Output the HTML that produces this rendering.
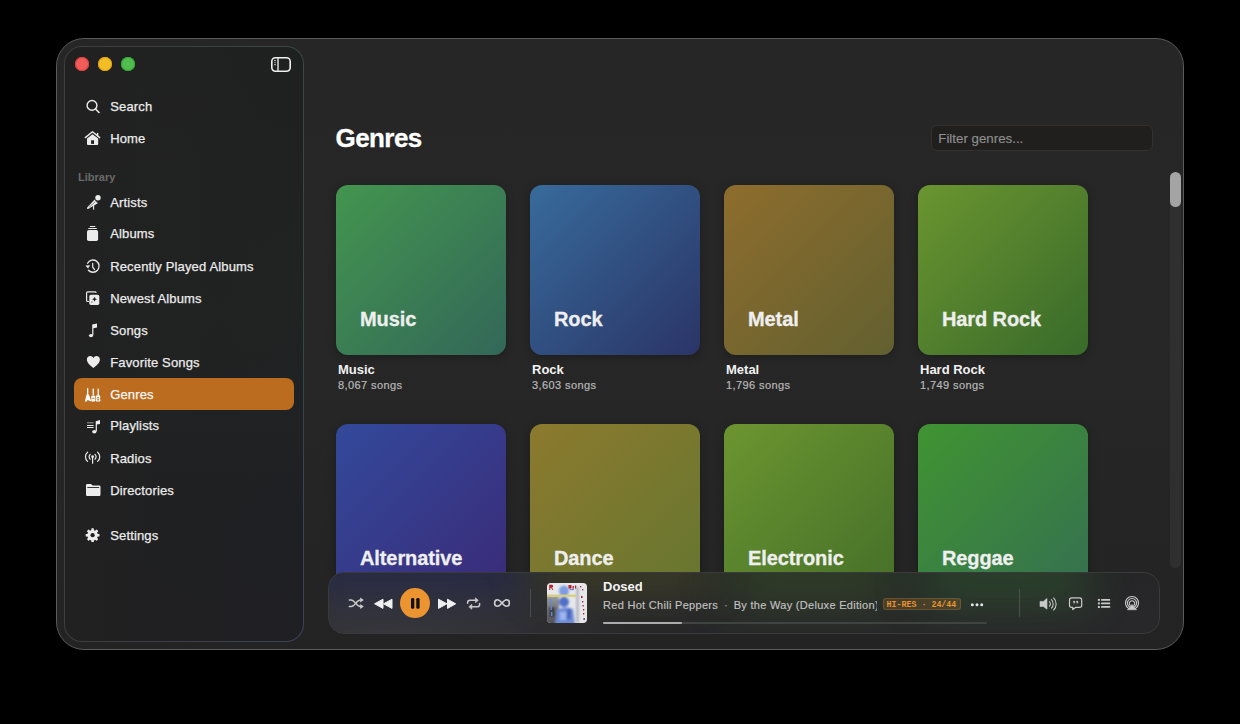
<!DOCTYPE html>
<html><head><meta charset="utf-8">
<style>
*{box-sizing:border-box;margin:0;padding:0}
html,body{width:1240px;height:724px;background:#000;overflow:hidden;font-family:"Liberation Sans",sans-serif;-webkit-font-smoothing:antialiased}
.abs{position:absolute}
#win{position:absolute;left:56px;top:38px;width:1128px;height:612px;border-radius:28px;background:linear-gradient(180deg,#262626 0%,#272727 50%,#232323 100%);border:1px solid #5a5a5a;overflow:hidden}
.tl{position:absolute;top:57px;width:14px;height:14px;border-radius:50%}
.item{position:absolute;left:110.2px;font-size:13px;line-height:13px;color:#ececec;white-space:nowrap;letter-spacing:0.15px;-webkit-text-stroke:0.25px #ececec}
.ico{position:absolute;left:84px;width:18px;height:18px}
.card{position:absolute;width:170px;height:170px;border-radius:12px;box-shadow:0 2px 8px rgba(0,0,0,0.25)}
.ctitle{position:absolute;left:24px;top:124px;font-size:20px;line-height:20px;font-weight:bold;color:#efefef;letter-spacing:-0.1px;white-space:nowrap;-webkit-text-stroke:0.3px #efefef}
.lbl{position:absolute;font-size:13px;line-height:13px;font-weight:bold;color:#f2f2f2;white-space:nowrap}
.cnt{position:absolute;font-size:11px;line-height:11px;color:#b8b8b8;white-space:nowrap;letter-spacing:0.4px;-webkit-text-stroke:0.2px #b8b8b8}
</style></head>
<body>
<div id="win"></div>
<div id="sideb" class="abs" style="left:64px;top:46px;width:240px;height:596px;border-radius:18px;background:linear-gradient(90deg,rgba(62,62,62,1) 0%,rgba(62,62,62,0.6) 50%,rgba(62,62,62,0) 100%),linear-gradient(180deg,#3a4a40 0%,#2f4a42 45%,#3a4256 80%,#3e4258 100%)"></div>
<div id="side" class="abs" style="left:65px;top:47px;width:238px;height:594px;border-radius:17px;background:linear-gradient(90deg,rgba(33,33,33,1) 0%,rgba(33,33,33,0) 100%),linear-gradient(180deg,#1f2120 0%,#202322 45%,#1f2024 80%,#1f1f24 100%)"></div>
<div class="tl" style="left:75px;background:#f15b5a;box-shadow:inset 0 0 0 1px #e0403c"></div>
<div class="tl" style="left:98px;background:#f3bd25;box-shadow:inset 0 0 0 1px #dea216"></div>
<div class="tl" style="left:121px;background:#52bd4f;box-shadow:inset 0 0 0 1px #33a833"></div>

<!-- sidebar toggle -->
<svg class="abs" style="left:270px;top:56px" width="22" height="17" viewBox="0 0 22 17">
<rect x="1.8" y="1.8" width="18.4" height="13.4" rx="3.6" fill="none" stroke="#f0f0f0" stroke-width="1.6"/>
<line x1="8" y1="1.8" x2="8" y2="15.2" stroke="#d8d8d8" stroke-width="1.5"/>
<line x1="4.2" y1="4.6" x2="5.8" y2="4.6" stroke="#ddd" stroke-width="1"/>
<line x1="4.2" y1="6.7" x2="5.8" y2="6.7" stroke="#aaa" stroke-width="1"/>
<line x1="4.2" y1="8.7" x2="5.8" y2="8.7" stroke="#ddd" stroke-width="1"/>
</svg>

<!-- sidebar items -->
<div class="item" style="top:100px">Search</div>
<div class="item" style="top:132px">Home</div>
<div class="abs" style="left:78px;top:171.7px;font-size:11px;line-height:11px;font-weight:bold;color:#6a6a6a">Library</div>
<div class="abs" style="left:74px;top:378px;width:220px;height:32px;border-radius:8px;background:#bb6c1f"></div>
<div class="item" style="top:196px">Artists</div>
<div class="item" style="top:227px">Albums</div>
<div class="item" style="top:260px">Recently Played Albums</div>
<div class="item" style="top:292px">Newest Albums</div>
<div class="item" style="top:323.6px">Songs</div>
<div class="item" style="top:356px">Favorite Songs</div>
<div class="item" style="top:388px;color:#fff">Genres</div>
<div class="item" style="top:419.4px">Playlists</div>
<div class="item" style="top:451.8px">Radios</div>
<div class="item" style="top:483.7px">Directories</div>
<div class="item" style="top:529.3px">Settings</div>

<!-- main -->
<div class="abs" style="left:335.6px;top:125px;font-size:26px;line-height:26px;font-weight:bold;color:#fff;letter-spacing:-0.6px;-webkit-text-stroke:0.3px #fff">Genres</div>
<div class="abs" style="left:931px;top:125px;width:222px;height:26px;border-radius:6px;background:#201f1e;border:1px solid #323130"></div>
<div class="abs" style="left:938.3px;top:131.8px;font-size:13.3px;line-height:13px;color:#8e8e8e;-webkit-text-stroke:0.15px #8e8e8e">Filter genres...</div>

<div class="abs" style="left:1170px;top:172px;width:11px;height:396px;border-radius:5.5px;background:#2f2f2f"></div>
<div class="abs" style="left:1170px;top:172px;width:11px;height:35px;border-radius:5.5px;background:#a4a4a4"></div>

<div class="card" style="left:336px;top:185px;background:linear-gradient(135deg,#43954f,#336759)"><div class="ctitle">Music</div></div>
<div class="card" style="left:530px;top:185px;background:linear-gradient(135deg,#376b9b,#2b3467)"><div class="ctitle">Rock</div></div>
<div class="card" style="left:724px;top:185px;background:linear-gradient(135deg,#8e6d2d,#626030)"><div class="ctitle">Metal</div></div>
<div class="card" style="left:918px;top:185px;background:linear-gradient(135deg,#6b9530,#386a2a)"><div class="ctitle">Hard Rock</div></div>

<div class="lbl" style="left:338px;top:363px">Music</div><div class="cnt" style="left:338px;top:380px">8,067 songs</div>
<div class="lbl" style="left:532px;top:363px">Rock</div><div class="cnt" style="left:532px;top:380px">3,603 songs</div>
<div class="lbl" style="left:726px;top:363px">Metal</div><div class="cnt" style="left:726px;top:380px">1,796 songs</div>
<div class="lbl" style="left:920px;top:363px">Hard Rock</div><div class="cnt" style="left:920px;top:380px">1,749 songs</div>

<div class="card" style="left:336px;top:424px;background:linear-gradient(135deg,#33499b,#3a2b78)"><div class="ctitle">Alternative</div></div>
<div class="card" style="left:530px;top:424px;background:linear-gradient(135deg,#8c7a2e,#667630)"><div class="ctitle">Dance</div></div>
<div class="card" style="left:724px;top:424px;background:linear-gradient(135deg,#6c9530,#457029)"><div class="ctitle">Electronic</div></div>
<div class="card" style="left:918px;top:424px;background:linear-gradient(135deg,#409432,#357050)"><div class="ctitle">Reggae</div></div>

<!-- player -->
<div id="player" class="abs" style="left:328px;top:572px;width:832px;height:62px;border-radius:16px;overflow:hidden;background:#28282a;border:1px solid #3a3a3c">
 <div class="abs" style="left:-30px;top:-40px;width:230px;height:70px;background:#34409a;filter:blur(22px);opacity:0.3"></div>
 <div class="abs" style="left:200px;top:-40px;width:180px;height:60px;background:#7a7a2e;filter:blur(22px);opacity:0.3"></div>
 <div class="abs" style="left:396px;top:-40px;width:170px;height:70px;background:#4a7a2a;filter:blur(24px);opacity:0.32"></div>
 <div class="abs" style="left:590px;top:-40px;width:170px;height:70px;background:#3a8a3a;filter:blur(24px);opacity:0.32"></div>
 <div class="abs" style="left:0;top:0;width:832px;height:62px;background:radial-gradient(ellipse 260px 70px at 60px 70px,rgba(70,70,76,0.55),rgba(70,70,76,0) 100%),linear-gradient(180deg,rgba(20,20,20,0.12) 0%,rgba(20,20,20,0) 60%)"></div>
</div>


<!-- icons overlay -->
<svg class="abs" style="left:0;top:0" width="1240" height="724" viewBox="0 0 1240 724">
<g fill="none" stroke="#ececec" stroke-linecap="round" stroke-linejoin="round">
 <!-- search -->
 <circle cx="92" cy="105.4" r="4.9" stroke-width="1.4"/>
 <line x1="95.6" y1="109" x2="99" y2="112.5" stroke-width="1.6"/>
 <!-- home roof -->
 <path d="M85.3 137.6 L92.5 131.8 L99.7 137.6" stroke-width="1.4"/>
 <line x1="97.6" y1="133.4" x2="97.6" y2="135.6" stroke-width="1.4"/>
</g>
<g fill="#ececec" stroke="none">
 <!-- home body -->
 <path d="M87 138.6 L92.5 134.3 L98.2 138.6 L98.2 144 Q98.2 145 97.2 145 L88 145 Q87 145 87 144 Z"/>
 <rect x="91.1" y="140.3" width="2.9" height="3.6" fill="#1f2120"/>
 <!-- albums -->
 <rect x="87" y="229.9" width="11.1" height="11.1" rx="1.8"/>
 <rect x="88.2" y="227.9" width="8.7" height="1" rx="0.5"/>
 <rect x="89.8" y="226.1" width="5.6" height="1" rx="0.5"/>
 <!-- newest front -->
 <rect x="89.3" y="294.8" width="10" height="10.1" rx="1.6"/>
 <!-- heart -->
 <path d="M93.4 368 C90 365.3 86.9 363 86.9 359.6 C86.9 357.4 88.4 356 90.3 356 C91.7 356 92.8 356.9 93.4 358 C94 356.9 95.1 356 96.5 356 C98.4 356 99.9 357.4 99.9 359.6 C99.9 363 96.8 365.3 93.4 368 Z"/>
 <!-- folder -->
 <path d="M86 485.2 Q86 484 87.2 484 L90.6 484 Q91.3 484 91.8 484.6 L92.6 485.5 L99.3 485.5 Q100.5 485.5 100.5 486.7 L100.5 494.7 Q100.5 495.9 99.3 495.9 L87.2 495.9 Q86 495.9 86 494.7 Z"/>
 <rect x="87.3" y="487.1" width="11.8" height="0.9" fill="#1f2122"/>
 <!-- radios center -->
 <circle cx="92.6" cy="456.7" r="1.4"/>
 <rect x="92" y="457" width="1.2" height="6.8" rx="0.6"/>
 <!-- songs note -->
 <path d="M92.2 335 L92.2 324.6 L97 323.6 L97 327.4 L93.4 328.3 L93.4 335 Z"/>
 <ellipse cx="91" cy="335.6" rx="2.1" ry="1.7"/>
 <!-- playlist -->
 <rect x="87" y="422.3" width="6.6" height="1" fill="#9a9a9a"/>
 <rect x="87" y="425" width="6.6" height="1"/>
 <rect x="87" y="427" width="6.6" height="1"/>
 <path d="M95.7 431.5 L95.7 421.2 L100 420.1 L100 423.9 L96.9 424.6 L96.9 431.5 Z"/>
 <ellipse cx="94.3" cy="431.7" rx="2.1" ry="1.7"/>
</g>
<g fill="none" stroke="#ececec" stroke-linecap="round">
 <!-- artists mic -->
 <circle cx="98" cy="197.8" r="2.7" fill="#ececec" stroke="none"/>
 <path d="M94.6 199.6 L98.2 203 L88.6 208.8 Q87.4 209.4 87 208.6 Q86.8 207.8 87.4 207.2 Z" fill="#ececec" stroke="none"/>
 <line x1="95" y1="200.4" x2="97.6" y2="202.8" stroke="#1f2120" stroke-width="0.8"/>
 <line x1="89.2" y1="207.2" x2="94.6" y2="202.4" stroke="#5a5a5a" stroke-width="0.7"/>
 <line x1="93.6" y1="204.4" x2="93.6" y2="209.2" stroke-width="1.1"/>
 <!-- clock -->
 <path d="M87.6 263.2 A6.1 6.1 0 1 1 88.4 270.2" stroke-width="1.3"/>
 <path d="M92.7 263.4 L92.7 267.2 L94.6 269.6" stroke-width="1.2"/>
 <!-- newest back -->
 <path d="M96 292.4 Q96 291.9 95 291.9 L87.6 291.9 Q86.6 291.9 86.6 293 L86.6 300.6 Q86.6 301.5 87.6 301.5 L88.6 301.5" stroke-width="1.2"/>
 <!-- radios arcs -->
 <path d="M90.2 454.4 A3.2 3.2 0 0 0 90.2 459.2" stroke-width="1.2"/>
 <path d="M95 454.4 A3.2 3.2 0 0 1 95 459.2" stroke-width="1.2"/>
 <path d="M87.6 452.2 A6 6 0 0 0 87.6 461.4" stroke-width="1.2"/>
 <path d="M97.6 452.2 A6 6 0 0 1 97.6 461.4" stroke-width="1.2"/>
</g>
<!-- clock arrow -->
<path d="M85.4 265.4 L88 268.4 L90.2 265.2 Z" fill="#ececec"/>
<!-- sparkle -->
<path d="M94.5 296.8 Q94.9 299 97 299.3 Q94.9 299.6 94.5 301.8 Q94.1 299.6 92 299.3 Q94.1 299 94.5 296.8 Z" fill="#1f2120"/>
<rect x="91.2" y="301.4" width="1.3" height="1.3" fill="#777"/>
<!-- gear -->
<g transform="translate(92.6 535.2)" fill="#ececec">
 <circle r="5.3"/>
 <g id="tooth"><rect x="-1.3" y="-6.9" width="2.6" height="3" rx="0.6"/></g>
 <use href="#tooth" transform="rotate(45)"/>
 <use href="#tooth" transform="rotate(90)"/>
 <use href="#tooth" transform="rotate(135)"/>
 <use href="#tooth" transform="rotate(180)"/>
 <use href="#tooth" transform="rotate(225)"/>
 <use href="#tooth" transform="rotate(270)"/>
 <use href="#tooth" transform="rotate(315)"/>
 <circle r="2.1" fill="#1f1f21"/>
</g>
<!-- genres guitars -->
<g fill="#fff">
 <rect x="87" y="388.2" width="1.3" height="7"/>
 <rect x="92.6" y="388.6" width="1.3" height="7"/>
 <rect x="97.6" y="388.6" width="1.3" height="7"/>
 <path d="M86.6 394.6 L88.9 394.6 L91.4 401.6 L88.6 400.4 L87.8 399.5 L86.8 401.6 L84.8 401.6 Z"/>
 <rect x="91.3" y="395.8" width="4" height="5.8" rx="0.8"/>
 <path d="M96.4 395.2 L99.9 395.2 L100.4 397.5 L99.8 398.4 L100.6 400.2 L100 401.6 L96.2 401.6 L95.6 400.2 L96.4 398.4 L95.8 397.5 Z"/>
</g>
<g fill="#bb6c1f">
 <rect x="92.3" y="397.8" width="2" height="1"/>
 <rect x="97.2" y="397.2" width="1.8" height="1.2"/>
 <rect x="97.2" y="399.2" width="1.8" height="1.2"/>
</g>
</svg>

<!-- player contents -->
<svg class="abs" style="left:0;top:0" width="1240" height="724" viewBox="0 0 1240 724">
 <!-- shuffle -->
 <g fill="none" stroke="#c9c9c9" stroke-width="1.5" stroke-linecap="round">
  <path d="M349.3 599.9 L351.2 599.9 C355 599.9 356.3 606.6 360.4 606.6 L362 606.6"/>
  <path d="M349.3 606.6 L351.2 606.6 C355 606.6 356.3 599.9 360.4 599.9 L362 599.9"/>
 </g>
 <path d="M360.2 597.4 L363.8 599.9 L360.2 602.4 Z" fill="#c9c9c9"/>
 <path d="M360.2 604.1 L363.8 606.6 L360.2 609.1 Z" fill="#c9c9c9"/>
 <!-- rewind -->
 <g fill="#f0f0f0" stroke="#f0f0f0" stroke-width="1" stroke-linejoin="round">
  <path d="M374.6 603.8 L383 599.2 L383 608.4 Z"/>
  <path d="M383.6 603.8 L392 599.2 L392 608.4 Z"/>
 </g>
 <!-- play/pause -->
 <circle cx="415" cy="603.1" r="15" fill="#ec9430"/>
 <rect x="411" y="597.9" width="3.3" height="10.9" rx="1.4" fill="#111"/>
 <rect x="416.3" y="597.9" width="3.3" height="10.9" rx="1.4" fill="#111"/>
 <!-- forward -->
 <g fill="#f0f0f0" stroke="#f0f0f0" stroke-width="1" stroke-linejoin="round">
  <path d="M438.5 599.2 L446.9 603.8 L438.5 608.4 Z"/>
  <path d="M447.5 599.2 L455.7 603.8 L447.5 608.4 Z"/>
 </g>
 <!-- repeat -->
 <g fill="none" stroke="#c9c9c9" stroke-width="1.5" stroke-linecap="round">
  <path d="M467.6 603.3 L467.6 602.6 Q467.6 600.3 470 600.3 L476 600.3"/>
  <path d="M479.6 603.5 L479.6 604.4 Q479.6 606.8 477.2 606.8 L471 606.8"/>
 </g>
 <path d="M475.4 597.8 L478.4 600.3 L475.4 602.8 Z" fill="#c9c9c9" stroke="#c9c9c9" stroke-width="0.6" stroke-linejoin="round"/>
 <path d="M471.8 604.3 L468.8 606.8 L471.8 609.3 Z" fill="#c9c9c9" stroke="#c9c9c9" stroke-width="0.6" stroke-linejoin="round"/>
 <!-- infinity -->
 <path d="M502 603 C499.5 600 498 599.7 497.5 599.7 C495.6 599.7 494.6 601.3 494.6 603 C494.6 604.7 495.6 606.3 497.5 606.3 C498 606.3 499.5 606 502 603 C504.5 600 506 599.7 506.5 599.7 C508.4 599.7 509.4 601.3 509.4 603 C509.4 604.7 508.4 606.3 506.5 606.3 C506 606.3 504.5 606 502 603 Z" fill="none" stroke="#cfcfcf" stroke-width="1.6"/>
 <!-- dividers -->
 <rect x="530" y="589" width="1" height="28" fill="#4a4a4a"/>
 <rect x="1019" y="589" width="1" height="28" fill="#4e4e4e"/>
 <!-- progress -->
 <rect x="603" y="622" width="384" height="2" rx="1" fill="#404440"/>
 <rect x="603" y="622" width="79" height="2" rx="1" fill="#acacac"/>
 <!-- dots -->
 <circle cx="972.3" cy="604.8" r="1.5" fill="#e6e6e6"/>
 <circle cx="977" cy="604.8" r="1.5" fill="#e6e6e6"/>
 <circle cx="981.7" cy="604.8" r="1.5" fill="#e6e6e6"/>
 <!-- volume -->
 <path d="M1040 601.4 L1043.3 601.4 L1047 598.4 L1047 609.2 L1043.3 606.5 L1040 606.5 Z" fill="#c9c9c9" stroke="#c9c9c9" stroke-width="0.6" stroke-linejoin="round"/>
 <g fill="none" stroke="#c9c9c9" stroke-width="1.1" stroke-linecap="round">
  <path d="M1049.4 601.6 A3.2 3.2 0 0 1 1049.4 606.2"/>
  <path d="M1051.4 599.6 A6 6 0 0 1 1051.4 608.2"/>
  <path d="M1053.6 597.8 A8.6 8.6 0 0 1 1053.6 610"/>
 </g>
 <!-- lyrics -->
 <path d="M1071.6 597.9 L1079.6 597.9 Q1081.7 597.9 1081.7 600 L1081.7 605.2 Q1081.7 607.3 1079.6 607.3 L1075.8 607.3 L1072.8 609.6 L1072.8 607.3 L1071.6 607.3 Q1069.5 607.3 1069.5 605.2 L1069.5 600 Q1069.5 597.9 1071.6 597.9 Z" fill="none" stroke="#c9c9c9" stroke-width="1.2" stroke-linejoin="round"/>
 <circle cx="1074" cy="601.7" r="0.95" fill="#c9c9c9"/><path d="M1074.9 601.7 Q1074.9 603.4 1073.6 603.8" stroke="#c9c9c9" stroke-width="0.8" fill="none"/>
 <circle cx="1077.1" cy="601.7" r="0.95" fill="#c9c9c9"/><path d="M1078 601.7 Q1078 603.4 1076.7 603.8" stroke="#c9c9c9" stroke-width="0.8" fill="none"/>
 <!-- list -->
 <g fill="#c9c9c9">
  <rect x="1097.9" y="598.9" width="2" height="2"/>
  <rect x="1097.9" y="602.4" width="2" height="2"/>
  <rect x="1097.9" y="606" width="2" height="2"/>
  <rect x="1101" y="599" width="9.2" height="1.7" rx="0.4"/>
  <rect x="1101" y="602.5" width="9.2" height="1.7" rx="0.4"/>
  <rect x="1101" y="606.1" width="9.2" height="1.7" rx="0.4"/>
 </g>
 <!-- airplay -->
 <g fill="none" stroke="#c9c9c9" stroke-width="1.1" stroke-linecap="round">
  <path d="M1128.4 608.4 A6.5 6.5 0 1 1 1135.6 608.4"/>
  <path d="M1129.3 606.8 A4.6 4.6 0 1 1 1134.7 606.8"/>
  <path d="M1130.2 605.4 A2.7 2.7 0 1 1 1133.8 605.4"/>
 </g>
 <path d="M1132 604.4 L1136.6 609.8 L1127.4 609.8 Z" fill="#c9c9c9" stroke="#c9c9c9" stroke-width="0.5" stroke-linejoin="round"/>
</svg>
<!-- album art -->
<svg class="abs" style="left:547px;top:583px" width="40" height="40" viewBox="0 0 40 40">
 <defs><clipPath id="ac"><rect width="40" height="40" rx="4"/></clipPath>
 <filter id="bl" x="-20%" y="-20%" width="140%" height="140%"><feGaussianBlur stdDeviation="0.9"/></filter>
 <filter id="bl2"><feGaussianBlur stdDeviation="0.4"/></filter>
 <linearGradient id="lg" x1="0" y1="0" x2="0" y2="1"><stop offset="0" stop-color="#9a9ca2"/><stop offset="0.5" stop-color="#6e7074"/><stop offset="1" stop-color="#4a4b50"/></linearGradient></defs>
 <g clip-path="url(#ac)">
 <rect width="40" height="40" fill="#e6e8ec"/>
 <g filter="url(#bl)">
  <rect x="-2" y="13" width="14" height="30" fill="url(#lg)"/>
  <rect x="2" y="24" width="6" height="10" fill="#3e3f44"/>
  <rect x="29" y="4" width="3" height="36" fill="#b8bac2"/>
  <ellipse cx="17" cy="8" rx="5" ry="5.5" fill="#7d9be0"/>
  <ellipse cx="17" cy="19" rx="5" ry="5" fill="#4f6fc8"/>
  <path d="M8 42 L10 27 Q17 22 26 26 L28 42 Z" fill="#6e8dd8"/>
  <rect x="13" y="29" width="6" height="8" fill="#9fb6ee"/>
  <rect x="20" y="26" width="4" height="10" fill="#4a66c0"/>
 </g>
 <rect x="0" y="11.6" width="29" height="2.3" fill="#d6d07c" filter="url(#bl2)"/>
 <g filter="url(#bl2)" fill="#b3232f">
  <path d="M2.2 7 L2.2 1.8 L5 1.8 Q6.2 1.8 6.2 3.3 Q6.2 4.6 5 4.6 L6.3 7 L5.2 7 L4.2 4.8 L3.3 4.8 L3.3 7 Z"/>
  <rect x="21.5" y="2" width="3" height="3.6"/>
  <rect x="25.5" y="3" width="1.4" height="2.6"/>
  <rect x="28" y="2.5" width="1.2" height="3"/>
  <rect x="33" y="3" width="1.3" height="1.3"/>
  <rect x="35" y="6" width="1.3" height="1.3"/>
  <rect x="34" y="13" width="1.6" height="2"/>
  <rect x="35" y="18" width="1.3" height="1.5"/>
  <rect x="35.5" y="22" width="1.3" height="1.5"/>
  <rect x="36" y="26" width="1.3" height="1.5"/>
  <rect x="36" y="30" width="1.3" height="1.5"/>
  <rect x="36.5" y="35" width="1.3" height="2" fill="#5a2a70"/>
 </g>
 <g filter="url(#bl2)" fill="#5c8ad8">
  <rect x="3" y="16" width="1.4" height="5"/>
  <rect x="3.5" y="23" width="1.4" height="4"/>
  <rect x="4" y="29" width="1.4" height="4"/>
  <rect x="23" y="6" width="4" height="1.2"/>
 </g>
 </g>
</svg>
<!-- player text -->
<div class="abs" style="left:603px;top:580px;font-size:13px;line-height:13px;font-weight:bold;color:#f4f4f4">Dosed</div>
<div class="abs" style="left:603px;top:598.6px;width:274px;overflow:hidden;font-size:11px;line-height:12px;color:#c2c2c2;white-space:nowrap;letter-spacing:0.3px;-webkit-text-stroke:0.15px #c2c2c2">Red Hot Chili Peppers<span style="display:inline-block;width:15.5px;text-align:center;color:#8a8a8a">&#183;</span>By the Way (Deluxe Edition)</div>
<div class="abs" style="left:883px;top:597.5px;width:78px;height:12.6px;border-radius:3px;background:rgba(236,148,48,0.16);border:1px solid rgba(236,148,48,0.22)"></div>
<div class="abs" style="left:886.6px;top:599.6px;font-family:'Liberation Mono',monospace;font-size:8.3px;line-height:10px;font-weight:bold;color:#ea922f;white-space:nowrap">HI-RES &#183; 24/44</div>
</body></html>
